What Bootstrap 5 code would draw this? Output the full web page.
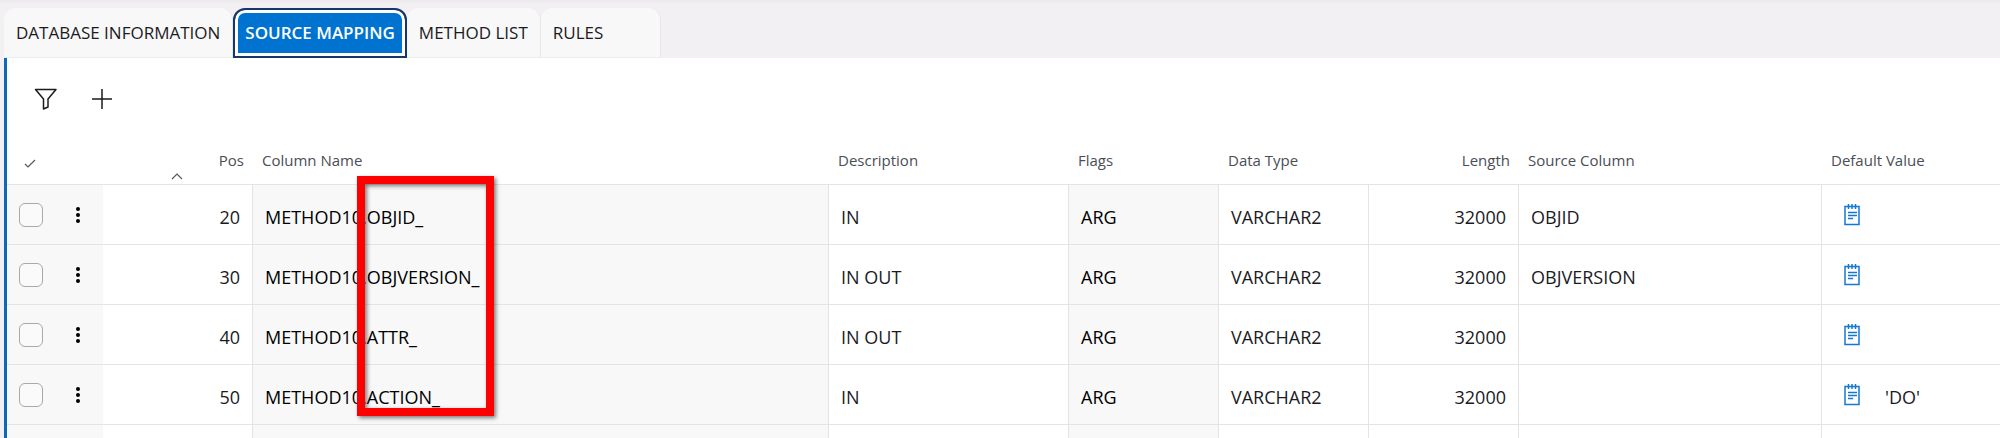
<!DOCTYPE html>
<html lang="en">
<head>
<meta charset="utf-8">
<meta name="viewport" content="width=device-width, initial-scale=1">
<title>Source Mapping</title>
<link href="https://cdn.jsdelivr.net/npm/bootstrap@5.3.0/dist/css/bootstrap.min.css" rel="stylesheet">
<style>
  body { background: #f2f0f3; font-family: "Open Sans", "Noto Sans", sans-serif; color: #1b1b1f; overflow: hidden; height: 100vh; }
  .page-top { height: 8px; background: linear-gradient(#ebe9ec, #f2f0f3 4px); }

  /* Tabs */
  .tab-strip { padding-left: 4px; border: 0; flex-wrap: nowrap; }
  .tab-strip .nav-link { height: 50px; margin: 0; padding: 0 12px; border: 0; border-right: 1px solid #e6e6e8; border-bottom: 1px solid #ececee; border-radius: 12px 12px 0 0; background: #f8f8f8; color: #1b1b1f; font-size: 17px; font-weight: 500; line-height: 24px; white-space: nowrap; }
  .tab-strip .nav-link.active { padding: 0 10px; border: 2px solid #17366b; box-shadow: inset 0 0 0 3px #fff; background: #0073d1; color: #fff; font-weight: 600; }
  .tab-strip .nav-link.tab-wide { min-width: 120px; text-align: left; }

  /* Panel */
  .panel { margin-left: 4px; border-left: 3px solid #0e68b8; background: #fff; overflow: hidden; min-height: 0; }
  .tool-row { height: 82px; padding: 0 22px; gap: 22px; }
  .icon-btn { width: 34px; height: 34px; padding: 0; display: flex; align-items: center; justify-content: center; border: 0; background: none; color: #1b1b1f; }

  /* Grid */
  .map-grid { table-layout: fixed; width: 100%; min-width: 1900px; margin: 0; border-collapse: separate; border-spacing: 0; }
  .map-grid th { position: relative; padding: 8px 9px 12px; border-bottom: 1px solid #e4e4e5; font-size: 15px; font-weight: 400; line-height: 24px; color: #4a4e55; white-space: nowrap; }
  .map-grid td { height: 60px; padding: 20px 12px 15px; border-right: 1px solid #e4e4e5; border-bottom: 1px solid #e4e4e5; font-size: 18px; line-height: 24px; white-space: nowrap; vertical-align: top; }
  .map-grid td:last-child, .map-grid td.pick-cell { border-right: 0; }
  .map-grid td.pick-cell { padding: 18px 13px 17px 12px; }
  .map-grid td.locked, .map-grid td.pick-cell { background: #f8f8f8; color: #000; }
  .c-pick { width: 96px; } .c-num { width: 150px; } .c-name { width: 576px; } .c-desc { width: 240px; } .c-src { width: 303px; }
  .pick { width: 24px; height: 24px; margin: 0; border: 1px solid #a9a9ab; border-radius: 6px !important; background-color: #fafafa; }
  .menu-btn { width: 24px; height: 24px; padding: 0; border: 0; background: none; display: flex; align-items: center; justify-content: center; }
  .sort-mark { position: absolute; left: 68px; bottom: 4px; }
  .note-btn { height: 24px; padding: 0; margin: -2px 25px 0 10px; border: 0; background: none; display: flex; align-items: center; }

  /* Callout frame laid over the column names */
  .callout { position: absolute; left: 350px; top: 36px; width: 137px; height: 240px; border: 8px solid #f00; box-shadow: 2px 2px 4px rgba(0,0,0,.5), inset 2px 2px 4px rgba(0,0,0,.5); pointer-events: none; }
</style>
</head>
<body class="d-flex flex-column">
<svg class="d-none" aria-hidden="true">
  <symbol id="dots" viewBox="0 0 6 18"><circle cx="3" cy="3" r="2"/><circle cx="3" cy="9" r="2"/><circle cx="3" cy="15" r="2"/></symbol>
  <symbol id="note" viewBox="0 0 16 22"><path d="M1 2.500h14v18H1zM4.500 0v5M8 0v5M11.500 0v5" fill="none" stroke="#1478d2" stroke-width="1.500"/><path d="M4 8.500h9M4 11.500h9M4 14.500h5" fill="none" stroke="#1478d2" stroke-width="1.300"/></symbol>
</svg>

<div class="page-top flex-shrink-0"></div>
<ul class="nav nav-tabs tab-strip flex-shrink-0" role="tablist">
  <li class="nav-item"><button class="nav-link" type="button" role="tab">DATABASE INFORMATION</button></li>
  <li class="nav-item"><button class="nav-link active" type="button" role="tab" aria-selected="true">SOURCE MAPPING</button></li>
  <li class="nav-item"><button class="nav-link" type="button" role="tab">METHOD LIST</button></li>
  <li class="nav-item"><button class="nav-link tab-wide" type="button" role="tab">RULES</button></li>
</ul>

<main class="panel flex-grow-1">
  <div class="tool-row d-flex align-items-center">
    <button class="icon-btn" type="button" aria-label="Filter"><svg width="24" height="24" viewBox="0 0 24 24" fill="none" stroke="currentColor" stroke-width="1.500" stroke-linejoin="round"><path d="M1.500 2.500h20.500l-8 9.500v8l-4.500 2v-10z"/></svg></button>
    <button class="icon-btn" type="button" aria-label="Add"><svg width="20" height="20" viewBox="0 0 20 20" stroke="currentColor" stroke-width="1.500"><path d="M10 0v20M0 10h20"/></svg></button>
  </div>

  <div class="position-relative">
    <table class="map-grid">
      <colgroup><col class="c-pick"><col class="c-num"><col class="c-name"><col class="c-desc"><col class="c-num"><col class="c-num"><col class="c-num"><col class="c-src"><col></colgroup>
      <thead>
        <tr>
          <th scope="col" aria-label="Select"><svg class="ms-2 mt-1" width="12" height="9" viewBox="0 0 12 9" fill="none" stroke="#55585d" stroke-width="1.200"><path d="M1 5l3 3 7-7"/></svg></th>
          <th scope="col" class="text-end">Pos<svg class="sort-mark" width="12" height="7" viewBox="0 0 12 7" fill="none" stroke="#55585d" stroke-width="1.200"><path d="M1 6l5-5 5 5"/></svg></th>
          <th scope="col">Column Name</th>
          <th scope="col">Description</th>
          <th scope="col">Flags</th>
          <th scope="col">Data Type</th>
          <th scope="col" class="text-end">Length</th>
          <th scope="col">Source Column</th>
          <th scope="col">Default Value</th>
        </tr>
      </thead>
      <tbody>
        <tr>
          <td class="pick-cell"><div class="d-flex justify-content-between"><input class="form-check-input pick" type="checkbox" aria-label="Select row 20"><button class="menu-btn" type="button" aria-label="Row menu"><svg width="6" height="18"><use href="#dots"/></svg></button></div></td>
          <td class="text-end">20</td><td class="locked">METHOD10.OBJID_</td><td>IN</td><td class="locked">ARG</td><td>VARCHAR2</td><td class="text-end">32000</td><td>OBJID</td>
          <td><div class="d-flex"><button class="note-btn" type="button" aria-label="Edit value"><svg width="16" height="22"><use href="#note"/></svg></button></div></td>
        </tr>
        <tr>
          <td class="pick-cell"><div class="d-flex justify-content-between"><input class="form-check-input pick" type="checkbox" aria-label="Select row 30"><button class="menu-btn" type="button" aria-label="Row menu"><svg width="6" height="18"><use href="#dots"/></svg></button></div></td>
          <td class="text-end">30</td><td class="locked">METHOD10.OBJVERSION_</td><td>IN OUT</td><td class="locked">ARG</td><td>VARCHAR2</td><td class="text-end">32000</td><td>OBJVERSION</td>
          <td><div class="d-flex"><button class="note-btn" type="button" aria-label="Edit value"><svg width="16" height="22"><use href="#note"/></svg></button></div></td>
        </tr>
        <tr>
          <td class="pick-cell"><div class="d-flex justify-content-between"><input class="form-check-input pick" type="checkbox" aria-label="Select row 40"><button class="menu-btn" type="button" aria-label="Row menu"><svg width="6" height="18"><use href="#dots"/></svg></button></div></td>
          <td class="text-end">40</td><td class="locked">METHOD10.ATTR_</td><td>IN OUT</td><td class="locked">ARG</td><td>VARCHAR2</td><td class="text-end">32000</td><td></td>
          <td><div class="d-flex"><button class="note-btn" type="button" aria-label="Edit value"><svg width="16" height="22"><use href="#note"/></svg></button></div></td>
        </tr>
        <tr>
          <td class="pick-cell"><div class="d-flex justify-content-between"><input class="form-check-input pick" type="checkbox" aria-label="Select row 50"><button class="menu-btn" type="button" aria-label="Row menu"><svg width="6" height="18"><use href="#dots"/></svg></button></div></td>
          <td class="text-end">50</td><td class="locked">METHOD10.ACTION_</td><td>IN</td><td class="locked">ARG</td><td>VARCHAR2</td><td class="text-end">32000</td><td></td>
          <td><div class="d-flex"><button class="note-btn" type="button" aria-label="Edit value"><svg width="16" height="22"><use href="#note"/></svg></button><span>'DO'</span></div></td>
        </tr>
        <tr><td class="pick-cell"></td><td></td><td class="locked"></td><td></td><td class="locked"></td><td></td><td></td><td></td><td></td></tr>
      </tbody>
    </table>
    <div class="callout"></div>
  </div>
</main>
<script src="https://cdn.jsdelivr.net/npm/bootstrap@5.3.0/dist/js/bootstrap.bundle.min.js"></script>
</body>
</html>
